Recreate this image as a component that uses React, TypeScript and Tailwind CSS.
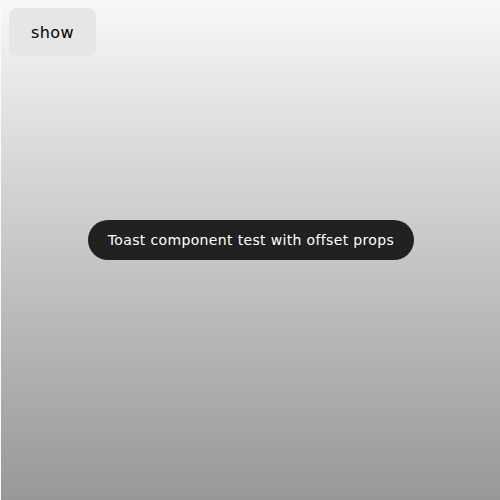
export default function App() {
  return (
    <div className="relative h-[500px] w-[500px] border-l border-l-[#fafafa] bg-gradient-to-b from-[#f8f8f8] to-[#989898] font-['DejaVu_Sans',sans-serif]">
      <div className="pl-2 pt-2">
        <button className="h-12 w-[87px] rounded-lg bg-[#e6e6e6] pt-px text-base tracking-wide text-black">
          show
        </button>
      </div>
      <div className="absolute left-[87px] top-[220px] flex h-10 w-[326px] items-center justify-center rounded-full bg-[#212121] text-sm tracking-wide text-white">
        Toast component test with offset props
      </div>
    </div>
  );
}
